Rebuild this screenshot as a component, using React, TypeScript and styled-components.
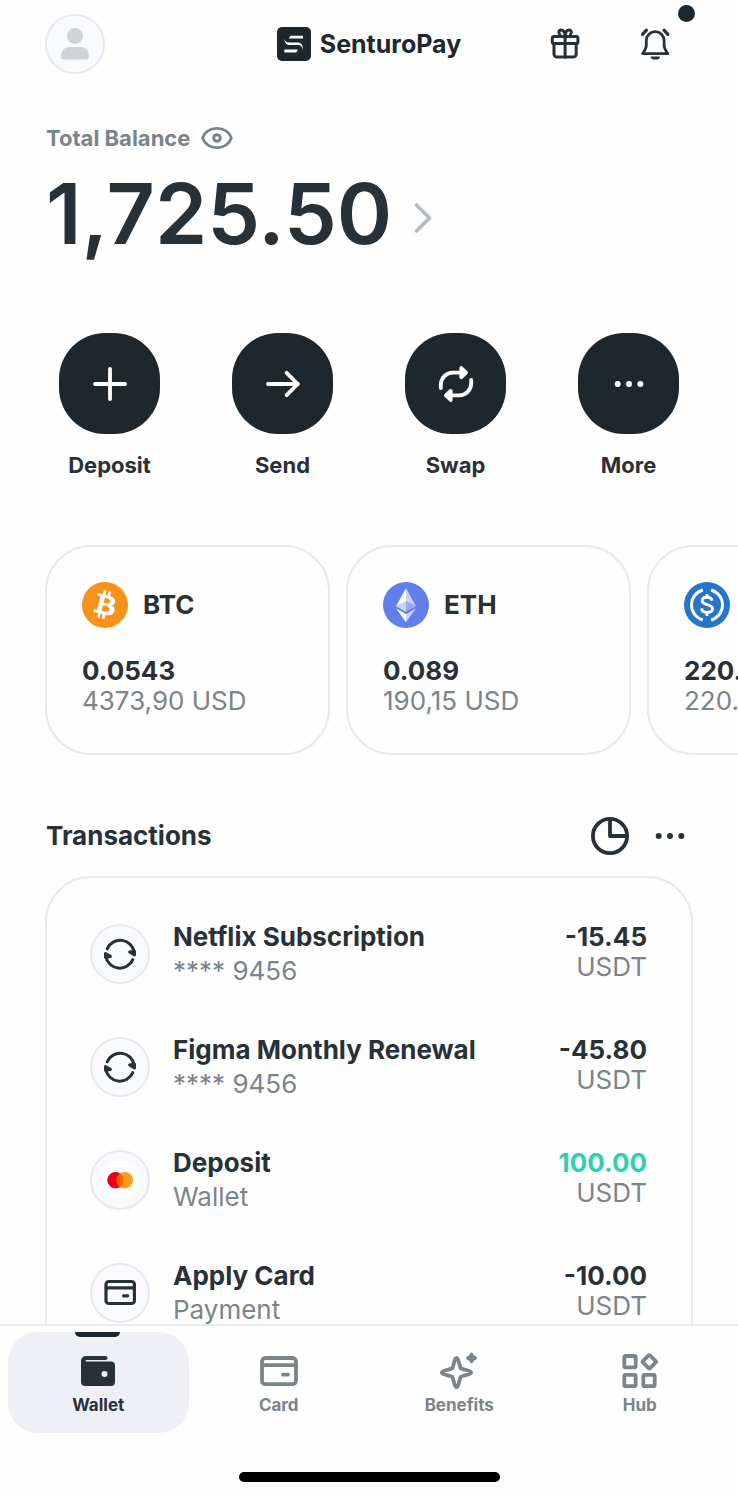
import React from "react";
import styled, { createGlobalStyle } from "styled-components";
import { SiBitcoin } from "react-icons/si";

const color = {
  ink: "#1f272e",
  text: "#293138",
  muted: "#7b848b",
  faint: "#b4bdc5",
  line: "#e8e8ed",
  tint: "#f9faff",
  tab: "#eff0f5",
  green: "#32cfae",
};

const GlobalStyle = createGlobalStyle`
  * { box-sizing: border-box; }
  body {
    margin: 0;
    background: #fefefe;
    color: ${color.text};
    font-family: Inter, "Liberation Sans", sans-serif;
  }
  button {
    padding: 0;
    border: 0;
    background: none;
    color: inherit;
    font: inherit;
    cursor: pointer;
  }
  h1, h2, p, ul { margin: 0; padding: 0; }
  ul { list-style: none; }
  svg { display: block; flex: none; }
`;

const Screen = styled.div`
  display: flex;
  flex-direction: column;
  height: 100vh;
`;

const Content = styled.main`
  flex: 1;
  min-height: 0;
  overflow-x: hidden;
  overflow-y: auto;
  scrollbar-width: none;
`;

const Header = styled.header`
  display: grid;
  grid-template-columns: 1fr auto 1fr;
  align-items: center;
  padding: 14px 53px 0 45px;
`;

const Avatar = styled.button`
  width: 60px;
  height: 60px;
`;

const Brand = styled.a`
  display: flex;
  align-items: center;
  gap: 9px;
  margin-left: 8px;
  color: ${color.ink};
  font-size: 25px;
  line-height: 34px;
  font-weight: 700;
  text-decoration: none;
`;

const HeaderActions = styled.div`
  display: flex;
  justify-content: flex-end;
  gap: 30px;
`;

const HeaderButton = styled.button`
  position: relative;
  display: grid;
  place-items: center;
  width: 60px;
  height: 60px;
`;

const UnreadDot = styled.span`
  position: absolute;
  top: -9px;
  right: -10px;
  width: 17px;
  height: 17px;
  border-radius: 50%;
  background: ${color.ink};
`;

const Balance = styled.section`
  padding: 50px 46px 0;
`;

const BalanceLabel = styled.div`
  display: flex;
  align-items: center;
  gap: 11px;
  color: ${color.muted};
  font-size: 22px;
  line-height: 28px;
  font-weight: 700;
`;

const BalanceValue = styled.button`
  display: flex;
  align-items: center;
  gap: 22px;
  margin-top: 18px;
  font-size: 84px;
  line-height: 88px;
  font-weight: 600;
`;

const Actions = styled.div`
  display: grid;
  grid-template-columns: repeat(4, 1fr);
  padding: 75px 23px 0;
`;

const Action = styled.button`
  display: flex;
  flex-direction: column;
  align-items: center;
  gap: 17px;
  font-size: 22px;
  line-height: 28px;
  font-weight: 700;
`;

const ActionDisc = styled.span`
  display: grid;
  place-items: center;
  width: 101px;
  height: 101px;
  border-radius: 46px;
  background: ${color.ink};
  color: #fff;
`;

const Assets = styled.ul`
  display: flex;
  gap: 16px;
  margin-top: 66px;
  padding: 0 45px;
  overflow-x: auto;
  scrollbar-width: none;
`;

const Asset = styled.li`
  flex: 0 0 285px;
  padding: 35px 36px 37px 35px;
  border: 2px solid ${color.line};
  border-radius: 46px;
  font-size: 26px;
  line-height: 30px;
`;

const AssetHead = styled.div`
  display: flex;
  align-items: center;
  gap: 15px;
  margin-bottom: 28px;
  font-weight: 700;
`;

const AssetAmount = styled.p`
  font-weight: 700;
`;

const AssetValue = styled.p`
  color: ${color.muted};
  font-weight: 400;
`;

const SectionHead = styled.div`
  display: flex;
  align-items: center;
  gap: 26px;
  height: 40px;
  margin: 61px 53px 20px 46px;
`;

const SectionTitle = styled.h2`
  margin-right: auto;
  font-size: 26px;
  line-height: 34px;
  font-weight: 700;
`;

const TransactionList = styled.ul`
  display: flex;
  flex-direction: column;
  gap: 45px;
  margin: 0 45px 45px;
  padding: 42px 44px 45px 43px;
  border: 2px solid ${color.line};
  border-radius: 46px;
`;

const Transaction = styled.li`
  display: flex;
  align-items: center;
  gap: 23px;
`;

const TransactionIcon = styled.span`
  flex: none;
  width: 60px;
  height: 60px;
`;

const Lines = styled.div<{ $end?: boolean }>`
  display: flex;
  flex-direction: column;
  align-self: flex-start;
  ${(p) => (p.$end ? "margin-left: auto; text-align: right;" : "")}
`;

const Primary = styled.span<{ $positive?: boolean }>`
  color: ${(p) => (p.$positive ? color.green : "inherit")};
  font-size: 26px;
  line-height: 34px;
  font-weight: 700;
`;

const Secondary = styled.span<{ $tight?: boolean }>`
  color: ${color.muted};
  font-size: 26px;
  line-height: ${(p) => (p.$tight ? 26 : 34)}px;
`;

const BottomBar = styled.footer`
  display: flex;
  flex-direction: column;
  align-items: center;
  gap: 39px;
  padding: 6px 8px 15px;
  border-top: 2px solid ${color.line};
`;

const Tabs = styled.nav`
  display: grid;
  grid-template-columns: repeat(4, 1fr);
  width: 100%;
`;

const Tab = styled.a<{ $active?: boolean }>`
  position: relative;
  display: flex;
  flex-direction: column;
  align-items: center;
  gap: 1px;
  height: 101px;
  padding-top: 19px;
  border-radius: 30px;
  background: ${(p) => (p.$active ? color.tab : "transparent")};
  color: ${(p) => (p.$active ? color.text : color.muted)};
  font-size: 17px;
  line-height: 26px;
  font-weight: 700;
  text-decoration: none;
`;

const TabMarker = styled.span`
  position: absolute;
  top: 0;
  left: 50%;
  width: 45px;
  height: 5px;
  margin-left: -23px;
  border-radius: 0 0 6px 6px;
  background: ${color.ink};
`;

const HomeIndicator = styled.div`
  width: 261px;
  height: 10px;
  border-radius: 5px;
  background: #000;
`;

const stroke = {
  fill: "none",
  stroke: "currentColor",
  strokeLinecap: "round" as const,
  strokeLinejoin: "round" as const,
};

const PersonIcon = () => (
  <svg width="60" height="60" viewBox="0 0 60 60">
    <circle cx="30" cy="30" r="29" fill={color.tint} stroke={color.line} strokeWidth="2" />
    <circle cx="30" cy="22" r="8" fill="#cdd2db" />
    <path d="M16 42.500v-1.200A8.300 8.300 0 0 1 24.300 33h11.400a8.300 8.300 0 0 1 8.300 8.300v1.200a3 3 0 0 1-3 3H19a3 3 0 0 1-3-3z" fill="#cdd2db" />
  </svg>
);

const LogoMark = () => (
  <svg width="34" height="34" viewBox="0 0 34 34">
    <rect width="34" height="34" rx="5" fill={color.ink} />
    <path d="M13.500 8.800H26v2.800H11.800z" fill="#fff" />
    <path d="M7.400 11c.4 3.400 1.900 4.400 4.900 4.400h8c4 0 5.600 2 5.600 7.600-1-3.600-2.400-4.900-5.400-4.900h-7.300c-3.800 0-5.800-2.100-5.800-7.100z" fill="#fff" />
    <path d="M7.400 22.600h13.400L19.300 25.400H7.400z" fill="#fff" />
  </svg>
);

const GiftIcon = () => (
  <svg width="36" height="36" viewBox="0 0 36 36" {...stroke} strokeWidth="3">
    <rect x="5.300" y="10.600" width="25.600" height="7" rx="1.600" />
    <path d="M7 17.800V28a3 3 0 0 0 3 3h16.200a3 3 0 0 0 3-3V17.800" />
    <path d="M18.100 10.600V31" />
    <path d="M18 10.200c0-3.600-1.400-6.200-3.900-6.200-2.300 0-3 2.400-1.400 4.200M18.200 10.200c0-3.600 1.400-6.200 3.900-6.200 2.300 0 3 2.400 1.400 4.200" />
  </svg>
);

const BellIcon = () => (
  <svg width="36" height="36" viewBox="0 0 36 36" {...stroke} strokeWidth="2.800">
    <path d="M5.600 27.600c1.900-2.600 3.700-5.300 3.700-8.400v-4.600a8.900 8.900 0 0 1 17.800 0v4.600c0 3.100 1.800 5.800 3.700 8.400z" />
    <path d="M13.600 30.400h9.400c0 2.200-2 3.200-4.700 3.200s-4.700-1-4.700-3.200z" fill="currentColor" stroke="none" />
    <path d="M5.500 8.400 9.400 4.100M30.900 8.400 27 4.100" strokeWidth="3.200" />
  </svg>
);

const EyeIcon = () => (
  <svg width="32" height="24" viewBox="0 0 32 24" {...stroke} strokeWidth="2.800">
    <path d="M1.600 12C4 5.600 9.800 2.400 16 2.400S28 5.600 30.400 12C28 18.400 22.200 21.600 16 21.600S4 18.400 1.600 12z" />
    <circle cx="16" cy="12" r="3.300" strokeWidth="3" />
  </svg>
);

const ChevronIcon = () => (
  <svg width="18" height="40" viewBox="0 0 18 40" {...stroke} stroke={color.faint} strokeWidth="3.800">
    <path d="M2.500 11 15.500 24 2.500 37" />
  </svg>
);

const PlusIcon = () => (
  <svg width="36" height="36" viewBox="0 0 36 36" {...stroke} strokeWidth="3.800">
    <path d="M18 3v30M3 18h30" />
  </svg>
);

const ArrowIcon = () => (
  <svg width="36" height="36" viewBox="0 0 36 36" {...stroke} strokeWidth="3.800">
    <path d="M3 18h30M21.600 6.800 32.800 18 21.600 29.200" />
  </svg>
);

const SwapIcon = () => (
  <svg width="36" height="36" viewBox="0 0 36 36" {...stroke} strokeWidth="3.800">
    <path d="M2.800 22V18.800A12.200 12.200 0 0 1 15 6.600H27" />
    <path d="M23.300 2 28 6.600 23.300 11.200z" fill="currentColor" />
    <path d="M33.200 14V17.200A12.200 12.200 0 0 1 21 29.400H9" />
    <path d="M12.700 24.800 8 29.400 12.700 34z" fill="currentColor" />
  </svg>
);

const DotsIcon = () => (
  <svg width="30" height="8" viewBox="0 0 30 8" fill="currentColor">
    <circle cx="3.700" cy="4" r="3" />
    <circle cx="15" cy="4" r="3" />
    <circle cx="26.300" cy="4" r="3" />
  </svg>
);

const PieIcon = () => (
  <svg width="38" height="38" viewBox="0 0 38 38" {...stroke} strokeWidth="3.800">
    <circle cx="19" cy="19" r="17.100" />
    <path d="M19 2v17h17" />
  </svg>
);

const BtcIcon = () => <SiBitcoin size={46} color="#f7931a" />;

const EthIcon = () => (
  <svg width="46" height="46" viewBox="0 0 46 46">
    <circle cx="23" cy="23" r="23" fill="#627eea" />
    <path d="M23 6.300 13 24.200 23 19.500z" fill="#fff" />
    <path d="M23 6.300 33 24.200 23 19.500z" fill="#c9d2f8" />
    <path d="M13 24.200 23 19.500V30z" fill="#c9d2f8" />
    <path d="M33 24.200 23 19.500V30z" fill="#96a8f1" />
    <path d="M13 26.200 23 32.200V40.300z" fill="#fff" />
    <path d="M33 26.200 23 32.200V40.300z" fill="#c9d2f8" />
  </svg>
);

const UsdcIcon = () => (
  <svg width="46" height="46" viewBox="0 0 46 46">
    <circle cx="23" cy="23" r="23" fill="#2775ca" />
    <g fill="none" stroke="#fff" strokeWidth="2.900">
      <path d="M18.800 8A15.600 15.600 0 0 0 18.800 38M27.200 8A15.600 15.600 0 0 1 27.200 38" />
      <path d="M28 18.800c-.3-2.400-2.200-3.500-5-3.500-2.900 0-4.800 1.300-4.800 3.500 0 5.100 10.300 2.500 10.300 8 0 2.400-2.200 3.700-5.400 3.700-3.400 0-5.300-1.400-5.500-4.100M23 12v3.500M23 30.500V34" />
    </g>
  </svg>
);

const RecurringIcon = () => (
  <svg width="60" height="60" viewBox="0 0 60 60" {...stroke} strokeWidth="3">
    <circle cx="30" cy="30" r="29" fill={color.tint} stroke={color.line} strokeWidth="2" />
    <path d="M17.200 24.800A14.200 14.200 0 0 1 44.200 28" />
    <path d="M39.600 28 44.500 30.900V27.200z" fill="currentColor" />
    <path d="M42.800 35.600A14.200 14.200 0 0 1 15.800 32.400" />
    <path d="M20.400 32.400 15.500 29.500V33.200z" fill="currentColor" />
  </svg>
);

const MastercardIcon = () => (
  <svg width="60" height="60" viewBox="0 0 60 60">
    <circle cx="30" cy="30" r="29" fill={color.tint} stroke={color.line} strokeWidth="2" />
    <circle cx="30" cy="30" r="19" fill="#fff" />
    <circle cx="25.500" cy="30.300" r="8.200" fill="#eb001b" />
    <circle cx="34.800" cy="30.300" r="8.200" fill="#f79e1b" />
    <path d="M30.150 23.550a8.200 8.200 0 0 1 0 13.500 8.200 8.200 0 0 1 0-13.500z" fill="#ff5f00" />
  </svg>
);

const CardPaymentIcon = () => (
  <svg width="60" height="60" viewBox="0 0 60 60" {...stroke} strokeWidth="3.200">
    <circle cx="30" cy="30" r="29" fill={color.tint} stroke={color.line} strokeWidth="2" />
    <rect x="16" y="18.500" width="28.400" height="22" rx="2.800" />
    <path d="M16 24.800h28.400M33.500 32.800h4.200" />
  </svg>
);

const WalletTabIcon = () => (
  <svg width="40" height="40" viewBox="0 0 40 40" fill="currentColor">
    <path
      fillRule="evenodd"
      d="M3 10a5 5 0 0 1 5-5h19.500a2 2 0 0 1 0 4H8a1 1 0 0 0 0 1.600h25a4 4 0 0 1 4 4V31a4 4 0 0 1-4 4H7a4 4 0 0 1-4-4zM26.500 20a3 3 0 1 0 0 6 3 3 0 0 0 0-6z"
    />
  </svg>
);

const CardTabIcon = () => (
  <svg width="40" height="40" viewBox="0 0 40 40" {...stroke} strokeWidth="3.800">
    <rect x="3" y="7" width="34" height="26.200" rx="3.400" />
    <path d="M3 14.200h34M24 23.700h5" />
  </svg>
);

const BenefitsTabIcon = () => (
  <svg width="40" height="40" viewBox="0 0 40 40" {...stroke} strokeWidth="3.800">
    <path d="M17.500 7C19.800 7 19.700 13.300 21.700 17.300 25.700 19.300 32.200 19.300 32.200 21.600S25.700 23.900 21.700 25.900C19.700 29.900 19.800 36.200 17.500 36.200S15.300 29.900 13.300 25.900C9.300 23.900 2.800 23.900 2.800 21.600S9.300 19.300 13.300 17.300C15.300 13.300 15.200 7 17.500 7z" />
    <path d="M32.500 2.500c1 0 1.100 2 1.700 2.600.7.700 2.800.9 2.800 1.900s-2.100 1.200-2.800 1.900c-.6.600-.7 2.600-1.700 2.600s-1.100-2-1.700-2.600c-.7-.7-2.800-.9-2.800-1.900s2.100-1.200 2.800-1.900c.6-.6.7-2.600 1.700-2.600z" fill="currentColor" strokeWidth="2" />
  </svg>
);

const HubTabIcon = () => (
  <svg width="40" height="40" viewBox="0 0 40 40" {...stroke} strokeWidth="3.800">
    <rect x="4.300" y="5" width="11.400" height="11.400" rx="1.500" />
    <rect x="4.300" y="23.800" width="11.400" height="11.400" rx="1.500" />
    <rect x="23.300" y="23.800" width="11.400" height="11.400" rx="1.500" />
    <rect x="24.300" y="5.800" width="10" height="10" rx="1" transform="rotate(45 29.300 10.800)" />
  </svg>
);

const actions = [
  { label: "Deposit", icon: <PlusIcon /> },
  { label: "Send", icon: <ArrowIcon /> },
  { label: "Swap", icon: <SwapIcon /> },
  { label: "More", icon: <DotsIcon /> },
];

const assets = [
  { name: "BTC", amount: "0.0543", value: "4373,90 USD", icon: <BtcIcon /> },
  { name: "ETH", amount: "0.089", value: "190,15 USD", icon: <EthIcon /> },
  { name: "USDC", amount: "220.00", value: "220.00 USD", icon: <UsdcIcon /> },
];

const transactions = [
  { title: "Netflix Subscription", detail: "**** 9456", amount: "-15.45", icon: <RecurringIcon /> },
  { title: "Figma Monthly Renewal", detail: "**** 9456", amount: "-45.80", icon: <RecurringIcon /> },
  { title: "Deposit", detail: "Wallet", amount: "100.00", positive: true, icon: <MastercardIcon /> },
  { title: "Apply Card", detail: "Payment", amount: "-10.00", icon: <CardPaymentIcon /> },
];

const tabs = [
  { label: "Wallet", icon: <WalletTabIcon />, active: true },
  { label: "Card", icon: <CardTabIcon /> },
  { label: "Benefits", icon: <BenefitsTabIcon /> },
  { label: "Hub", icon: <HubTabIcon /> },
];

export default function App() {
  return (
    <Screen>
      <GlobalStyle />
      <Content>
        <Header>
          <Avatar aria-label="Profile">
            <PersonIcon />
          </Avatar>
          <Brand href="#">
            <LogoMark />
            SenturoPay
          </Brand>
          <HeaderActions>
            <HeaderButton aria-label="Rewards">
              <GiftIcon />
            </HeaderButton>
            <HeaderButton aria-label="Notifications">
              <BellIcon />
              <UnreadDot />
            </HeaderButton>
          </HeaderActions>
        </Header>

        <Balance>
          <BalanceLabel>
            Total Balance
            <button aria-label="Hide balance">
              <EyeIcon />
            </button>
          </BalanceLabel>
          <BalanceValue>
            1,725.50
            <ChevronIcon />
          </BalanceValue>
        </Balance>

        <Actions>
          {actions.map((a) => (
            <Action key={a.label}>
              <ActionDisc>{a.icon}</ActionDisc>
              {a.label}
            </Action>
          ))}
        </Actions>

        <Assets>
          {assets.map((a) => (
            <Asset key={a.name}>
              <AssetHead>
                {a.icon}
                {a.name}
              </AssetHead>
              <AssetAmount>{a.amount}</AssetAmount>
              <AssetValue>{a.value}</AssetValue>
            </Asset>
          ))}
        </Assets>

        <SectionHead>
          <SectionTitle>Transactions</SectionTitle>
          <button aria-label="Statistics">
            <PieIcon />
          </button>
          <button aria-label="More options">
            <DotsIcon />
          </button>
        </SectionHead>

        <TransactionList>
          {transactions.map((t) => (
            <Transaction key={t.title}>
              <TransactionIcon>{t.icon}</TransactionIcon>
              <Lines>
                <Primary>{t.title}</Primary>
                <Secondary>{t.detail}</Secondary>
              </Lines>
              <Lines $end>
                <Primary $positive={t.positive}>{t.amount}</Primary>
                <Secondary $tight>USDT</Secondary>
              </Lines>
            </Transaction>
          ))}
        </TransactionList>
      </Content>

      <BottomBar>
        <Tabs>
          {tabs.map((t) => (
            <Tab key={t.label} href="#" $active={t.active}>
              {t.active && <TabMarker />}
              {t.icon}
              {t.label}
            </Tab>
          ))}
        </Tabs>
        <HomeIndicator />
      </BottomBar>
    </Screen>
  );
}
